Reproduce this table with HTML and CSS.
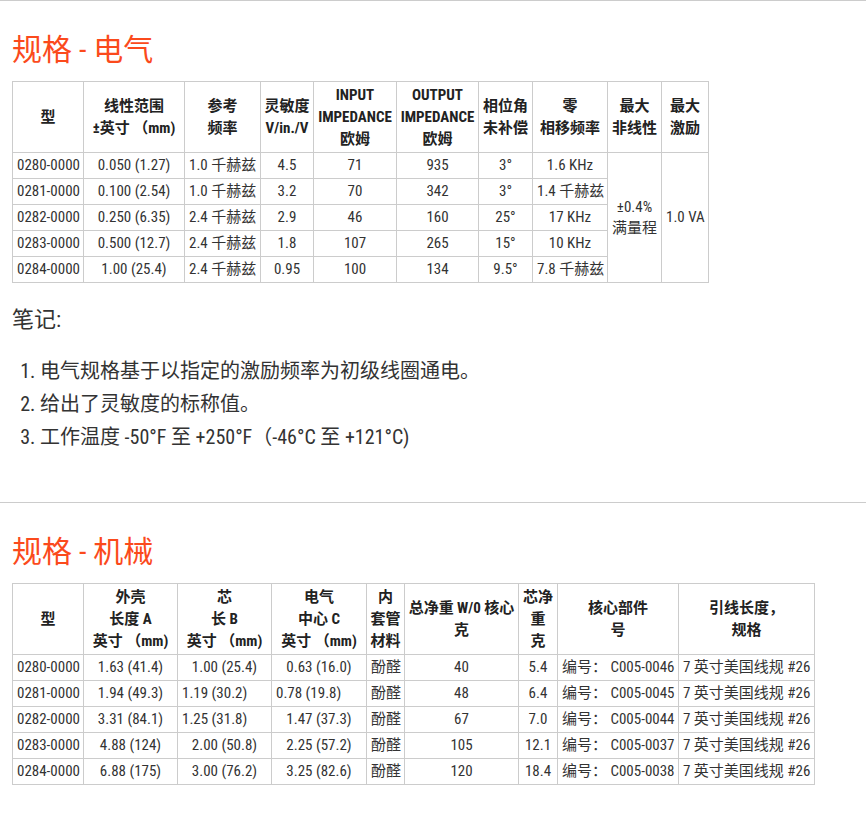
FILE: index.html
```html
<!DOCTYPE html>
<html lang="zh">
<head>
<meta charset="utf-8">
<title>规格</title>
<link rel="stylesheet" href="styles.css">
</head>
<body>
<section class="block">
  <h2 class="title">规格 - 电气</h2>
  <table class="spec t1">
    <colgroup>
      <col class="w71"><col class="w101"><col class="w76"><col class="w53"><col class="w83"><col class="w82"><col class="w54"><col class="w75"><col class="w54"><col class="w47">
    </colgroup>
    <thead>
      <tr>
        <th>型</th>
        <th>线性范围<br>±英寸 （mm)</th>
        <th>参考<br>频率</th>
        <th>灵敏度<br>V/in./V</th>
        <th>INPUT<br>IMPEDANCE<br>欧姆</th>
        <th>OUTPUT<br>IMPEDANCE<br>欧姆</th>
        <th>相位角<br>未补偿</th>
        <th>零<br>相移频率</th>
        <th>最大<br>非线性</th>
        <th>最大<br>激励</th>
      </tr>
    </thead>
    <tbody>
      <tr><td class="l">0280-0000</td><td>0.050 (1.27)</td><td>1.0 千赫兹</td><td>4.5</td><td>71</td><td>935</td><td>3°</td><td>1.6 KHz</td><td rowspan="5">±0.4%<br>满量程</td><td rowspan="5">1.0 VA</td></tr>
      <tr><td class="l">0281-0000</td><td>0.100 (2.54)</td><td>1.0 千赫兹</td><td>3.2</td><td>70</td><td>342</td><td>3°</td><td>1.4 千赫兹</td></tr>
      <tr><td class="l">0282-0000</td><td>0.250 (6.35)</td><td>2.4 千赫兹</td><td>2.9</td><td>46</td><td>160</td><td>25°</td><td>17 KHz</td></tr>
      <tr><td class="l">0283-0000</td><td>0.500 (12.7)</td><td>2.4 千赫兹</td><td>1.8</td><td>107</td><td>265</td><td>15°</td><td>10 KHz</td></tr>
      <tr><td class="l">0284-0000</td><td>1.00 (25.4)</td><td>2.4 千赫兹</td><td>0.95</td><td>100</td><td>134</td><td>9.5°</td><td>7.8 千赫兹</td></tr>
    </tbody>
  </table>
  <h3 class="notes-title">笔记:</h3>
  <ol class="notes">
    <li>电气规格基于以指定的激励频率为初级线圈通电。</li>
    <li>给出了灵敏度的标称值。</li>
    <li>工作温度 -50°F 至 +250°F（-46°C 至 +121°C)</li>
  </ol>
</section>
<section class="block">
  <h2 class="title">规格 - 机械</h2>
  <table class="spec t2">
    <colgroup>
      <col class="w71"><col class="w94"><col class="w94"><col class="w95"><col class="w38"><col class="w114"><col class="w39"><col class="w121"><col class="w136">
    </colgroup>
    <thead>
      <tr>
        <th>型</th>
        <th>外壳<br>长度 A<br>英寸 （mm)</th>
        <th>芯<br>长 B<br>英寸 （mm)</th>
        <th>电气<br>中心 C<br>英寸 （mm)</th>
        <th>内<br>套管<br>材料</th>
        <th>总净重 W/0 核心<br>克</th>
        <th>芯净<br>重<br>克</th>
        <th>核心部件<br>号</th>
        <th>引线长度，<br>规格</th>
      </tr>
    </thead>
    <tbody>
      <tr><td class="l">0280-0000</td><td>1.63 (41.4)</td><td>1.00 (25.4)</td><td>0.63 (16.0)</td><td class="l">酚醛</td><td>40</td><td>5.4</td><td class="l">编号： C005-0046</td><td class="l">7 英寸美国线规 #26</td></tr>
      <tr><td class="l">0281-0000</td><td>1.94 (49.3)</td><td class="l">1.19 (30.2)</td><td class="l">0.78 (19.8)</td><td class="l">酚醛</td><td>48</td><td>6.4</td><td class="l">编号： C005-0045</td><td class="l">7 英寸美国线规 #26</td></tr>
      <tr><td class="l">0282-0000</td><td>3.31 (84.1)</td><td class="l">1.25 (31.8)</td><td>1.47 (37.3)</td><td class="l">酚醛</td><td>67</td><td>7.0</td><td class="l">编号： C005-0044</td><td class="l">7 英寸美国线规 #26</td></tr>
      <tr><td class="l">0283-0000</td><td>4.88 (124)</td><td>2.00 (50.8)</td><td>2.25 (57.2)</td><td class="l">酚醛</td><td>105</td><td>12.1</td><td class="l">编号： C005-0037</td><td class="l">7 英寸美国线规 #26</td></tr>
      <tr><td class="l">0284-0000</td><td>6.88 (175)</td><td>3.00 (76.2)</td><td>3.25 (82.6)</td><td class="l">酚醛</td><td>120</td><td>18.4</td><td class="l">编号： C005-0038</td><td class="l">7 英寸美国线规 #26</td></tr>
    </tbody>
  </table>
</section>
</body>
</html>
```
FILE: styles.css
```css
html, body {
  margin: 0;
  padding: 0;
  background: #ffffff;
}

body {
  font-family: "Roboto Condensed", Roboto, "Noto Sans CJK SC", sans-serif;
  font-stretch: condensed;
  color: #333333;
  width: 866px;
}

.block {
  border-top: 1px solid #cccccc;
  padding: 0 12px;
}

.block + .block {
  margin-top: 48px;
}

.title {
  margin: 31px 0 13px;
  font-size: 30px;
  line-height: 36px;
  font-weight: 400;
  color: #fb4a1c;
}

.spec {
  border-collapse: collapse;
  table-layout: fixed;
  font-size: 15px;
  color: #333333;
}

.t1 { width: 697px; }
.t2 { width: 803px; }

.spec th,
.spec td {
  border: 1px solid #cccccc;
  white-space: nowrap;
  text-align: center;
  vertical-align: middle;
  overflow: hidden;
}

.spec th {
  padding: 2px 2px;
  line-height: 22px;
  font-weight: 700;
  color: #222222;
}

.spec td {
  padding: 2px 4px;
  line-height: 21px;
}

.spec td.l {
  text-align: left;
}

.w38 { width: 38px; }
.w39 { width: 39px; }
.w47 { width: 47px; }
.w53 { width: 53px; }
.w54 { width: 54px; }
.w71 { width: 71px; }
.w75 { width: 75px; }
.w76 { width: 76px; }
.w82 { width: 82px; }
.w83 { width: 83px; }
.w94 { width: 94px; }
.w95 { width: 95px; }
.w101 { width: 101px; }
.w114 { width: 114px; }
.w121 { width: 121px; }
.w136 { width: 136px; }

.notes-title {
  margin: 22px 0 20px;
  font-size: 22px;
  line-height: 30px;
  font-weight: 400;
  color: #333333;
}

.notes {
  margin: 0;
  padding-left: 28px;
  font-size: 20px;
  line-height: 33px;
  color: #333333;
}
```
